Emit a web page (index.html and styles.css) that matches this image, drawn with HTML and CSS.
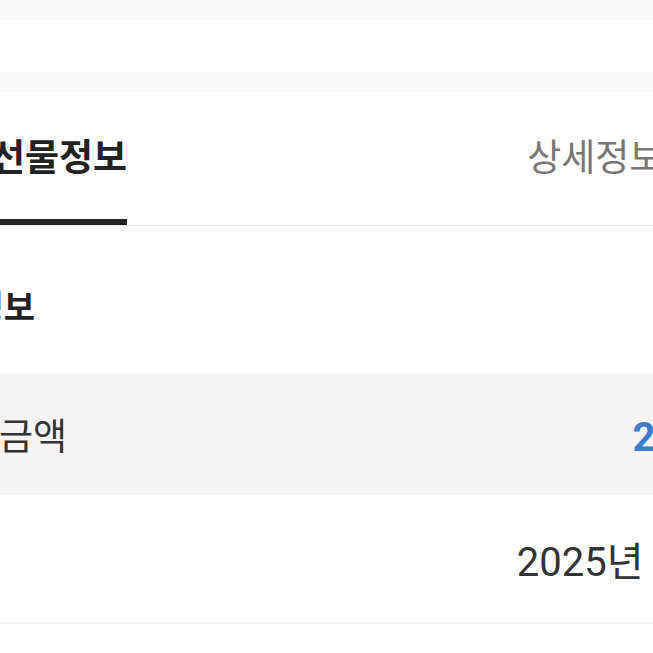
FILE: index.html
```html
<!DOCTYPE html>
<html lang="ko">
<head>
    <meta charset="UTF-8">
    <meta name="viewport" content="width=device-width, initial-scale=1.0">
    <title>선물정보</title>
    <link rel="stylesheet" href="styles.css">
</head>
<body>
    <div id="page">
        <div class="band"></div>
        <div class="blank"></div>
        <div class="band"></div>

        <div class="tabs">
            <div class="tab active">선물정보</div>
            <div class="tab">상세정보</div>
        </div>

        <div class="section-title">결제정보</div>

        <div class="row shaded">
            <div class="label">결제금액</div>
            <div class="value price">20,000원</div>
        </div>
        <div class="row bordered">
            <div class="label">일시</div>
            <div class="value">2025년 1월 1일</div>
        </div>
    </div>
</body>
</html>
```

FILE: styles.css
```css
* {
    margin: 0;
    padding: 0;
    box-sizing: border-box;
}

body {
    font-family: Roboto, "Noto Sans CJK KR", sans-serif;
    background: #fff;
    color: #222;
    width: 653px;
    height: 653px;
    overflow: hidden;
}

#page {
    margin-left: -100px;
    width: 906px;
}

.band {
    height: 20px;
    background: #f9f9f9;
}

.blank {
    height: 52px;
}

.tabs {
    display: flex;
    gap: 400px;
    padding-left: 91px;
    border-bottom: 1px solid #eeeeee;
}

.tab {
    font-size: 37px;
    line-height: 46px;
    padding: 44px 0 37px;
    color: #777;
    border-bottom: 6px solid transparent;
    white-space: nowrap;
}

.tab.active {
    font-weight: 700;
    color: #222;
    border-bottom-color: #222;
}

.section-title {
    font-size: 34px;
    line-height: 40px;
    font-weight: 700;
    color: #222;
    padding: 62px 20px 45px 10px;
}

.row {
    display: flex;
    justify-content: space-between;
    align-items: center;
    height: 122px;
    padding: 0 24px 0 31px;
    font-size: 37px;
    color: #333;
    white-space: nowrap;
}

.row.shaded {
    background: #f5f5f5;
}

.row.bordered {
    height: 129px;
    border-bottom: 2px solid #f3f3f3;
}

.value {
    font-size: 40px;
}

.value.price {
    font-weight: 700;
    color: #3d7ccc;
    margin-right: -12px;
}
```
